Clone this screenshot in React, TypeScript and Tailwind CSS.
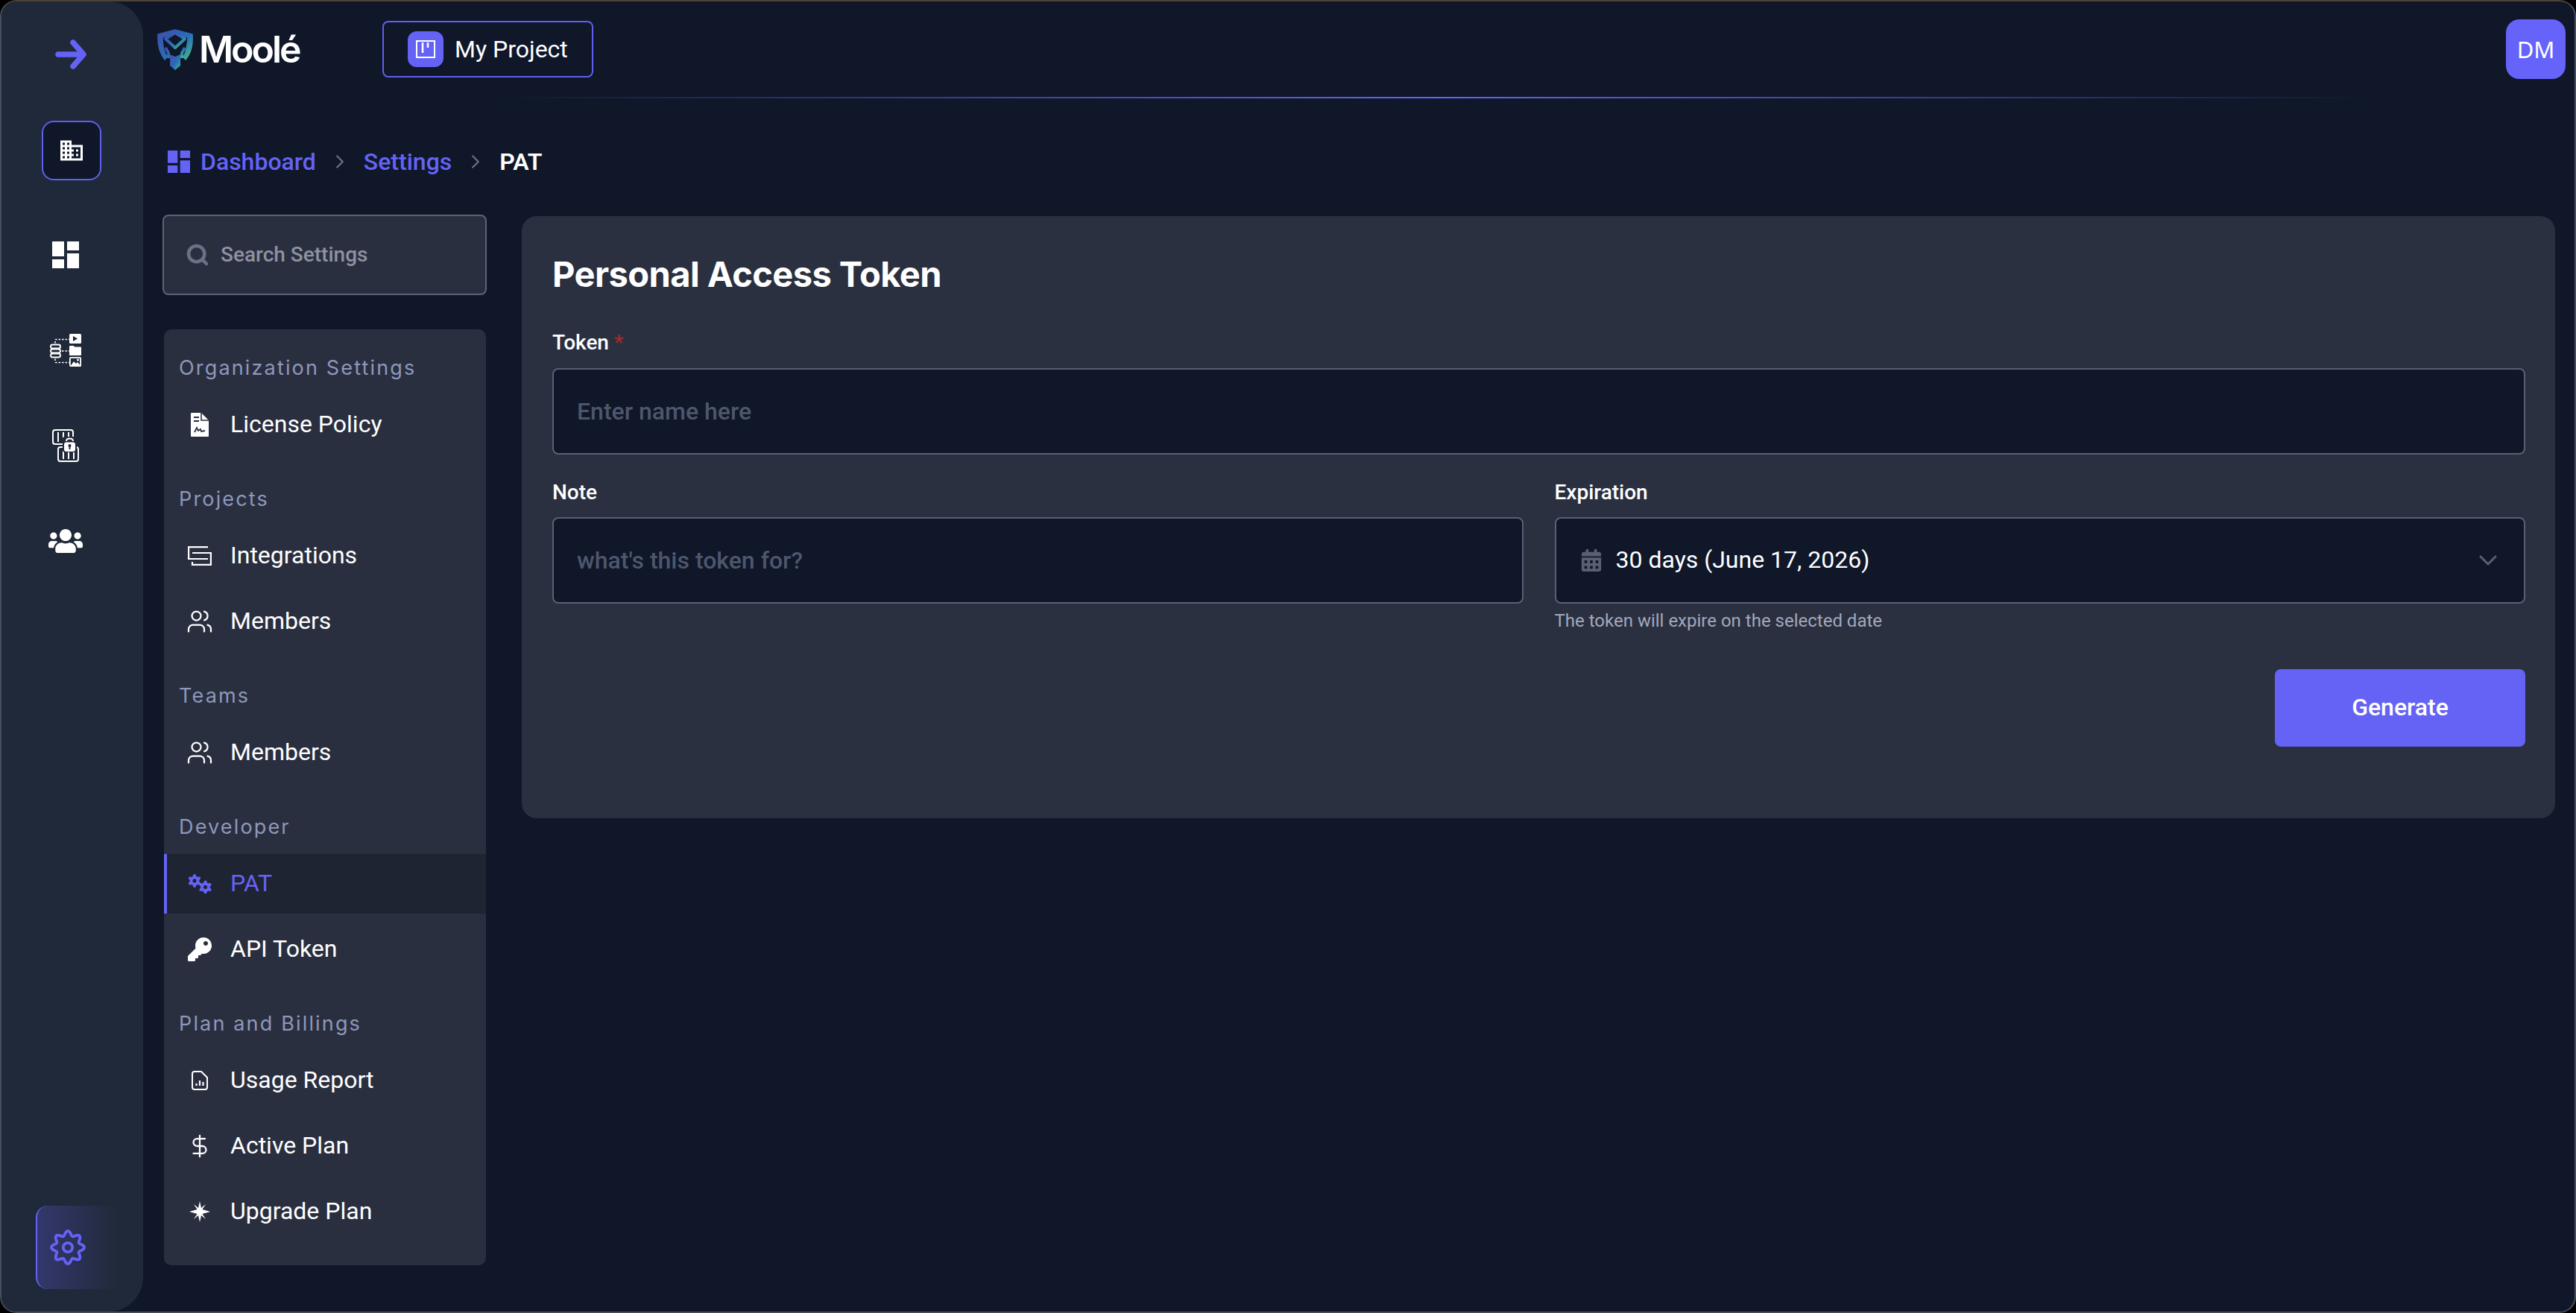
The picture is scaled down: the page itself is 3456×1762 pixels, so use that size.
import React from "react";
import { MdDashboard, MdDomain } from "react-icons/md";
import { FaUsers, FaKey, FaCalendarAlt } from "react-icons/fa";
import { ChevronDown, ChevronRight, DollarSign, Search, Users } from "lucide-react";

function flower(cx: number, cy: number, r: number, amp: number, lobes: number) {
  const pts: string[] = [];
  for (let i = 0; i < 240; i++) {
    const t = (i / 240) * Math.PI * 2;
    const rad = r + amp * Math.cos(lobes * t);
    pts.push(`${(cx + rad * Math.sin(t)).toFixed(2)} ${(cy - rad * Math.cos(t)).toFixed(2)}`);
  }
  return "M" + pts.join("L") + "Z";
}

function GearIcon() {
  return (
    <svg width="48" height="48" viewBox="0 0 48 48" fill="none" stroke="#6563f6" strokeWidth="3.8" strokeLinejoin="round">
      <path d={flower(24, 24, 19, 3, 8)} />
      <circle cx="24" cy="24" r="6.2" />
    </svg>
  );
}

function TwoGears() {
  return (
    <svg width="32" height="26" viewBox="0 0 32 26">
      <path fillRule="evenodd" fill="#6563f6" d={flower(9, 9, 7.6, 1.5, 6) + flower(9, 9, 2.6, 0, 6)} />
      <path fillRule="evenodd" fill="#6563f6" d={flower(23.5, 17.5, 7.6, 1.5, 6) + flower(23.5, 17.5, 2.6, 0, 6)} />
    </svg>
  );
}

function DataIcon() {
  return (
    <svg width="44" height="46" viewBox="0 0 44 46" fill="none">
      <g stroke="#fff" strokeWidth="1.9">
        <rect x="2" y="15.500" width="13" height="5" rx="2.500" />
        <rect x="2" y="21.500" width="13" height="5" rx="2.500" />
        <rect x="2" y="27.500" width="13" height="5" rx="2.500" />
      </g>
      <path d="M8 13.500V9.500q0-1 1-1H27M17 24h10M8 34.500v4q0 1 1 1H27" stroke="#fff" strokeWidth="1.600" strokeDasharray="2.500 2" />
      <rect x="27" y="1" width="16" height="13" rx="1.500" fill="#fff" />
      <path d="M32 4l6 3.500-6 3.500z" fill="#202939" />
      <path d="M27 18q0-1 1-1h5l1 1.500h8q1 0 1 1V29q0 1-1 1H28q-1 0-1-1z" fill="#fff" />
      <rect x="27.900" y="32.900" width="14.200" height="11.200" rx="1" stroke="#fff" strokeWidth="1.800" />
      <path d="M28 45l5-7 3 3 2-2 5 6z" fill="#fff" />
      <circle cx="38.500" cy="36" r="1.500" fill="#fff" />
    </svg>
  );
}

function LockIcon() {
  return (
    <svg width="36" height="44" viewBox="0 0 36 44" fill="none">
      <g stroke="#fff" strokeWidth="2">
        <rect x="1" y="1" width="27" height="19" rx="3" />
        <rect x="8" y="24" width="27" height="19" rx="3" />
        <path d="M8 4v13M15 4v13M22 4v13M15 27v13M22 27v13M29 27v13" />
      </g>
      <rect x="14" y="10" width="19" height="21" rx="3" fill="#202939" />
      <path d="M19 16q0-3.500 4.500-3.500t4.500 3.500" stroke="#fff" strokeWidth="1.800" />
      <rect x="16" y="17.500" width="15" height="12.500" rx="3" fill="#fff" />
      <circle cx="23.500" cy="22" r="2" fill="#202939" />
      <rect x="22.500" y="22.500" width="2" height="4.500" fill="#202939" />
    </svg>
  );
}

function ArrowIcon() {
  return (
    <svg width="44" height="42" viewBox="0 0 44 42" fill="none" stroke="#6563f6" strokeWidth="7.500" strokeLinecap="round" strokeLinejoin="round">
      <path d="M5 21h33M25 5l14 16-14 16" />
    </svg>
  );
}

function ShieldLogo() {
  return (
    <svg width="52" height="57" viewBox="0 0 52 57" fill="none">
      <defs>
        <linearGradient id="lg" x1="0" y1="0" x2="1" y2="1">
          <stop offset="0" stopColor="#3f4ea8" />
          <stop offset="0.55" stopColor="#2a6dbb" />
          <stop offset="1" stopColor="#46c07f" />
        </linearGradient>
      </defs>
      <g stroke="url(#lg)" strokeWidth="4" strokeLinejoin="round">
        <path d="M3 8L26 2l23 6c1 15-2 26-9 34l-3-4c1-1 5-8 6-26L26 7 9 12c0 14 3 22 6 26l-3 4C6 34 2 22 3 8z" fill="url(#lg)" strokeWidth="1.500" />
        <path d="M13 14l13 12 13-12-13-8z" />
        <path d="M13 26l4 7v7M39 26l-4 7v7" />
      </g>
      <path d="M19 35l7 3 7-3v15l-7 6-7-6z" fill="url(#lg)" />
    </svg>
  );
}

function KanbanIcon() {
  return (
    <svg width="26" height="24" viewBox="0 0 26 24" fill="none" stroke="#fff">
      <rect x="1" y="1" width="24" height="22" strokeWidth="2" />
      <path d="M9 3v14M16 3v7" strokeWidth="2.600" />
    </svg>
  );
}

function LicenseIcon() {
  return (
    <svg width="24" height="32" viewBox="0 0 24 32">
      <path d="M1 0h13l10 10v21a1 1 0 0 1-1 1H1a1 1 0 0 1-1-1V1a1 1 0 0 1 1-1z" fill="#fff" />
      <path d="M4 6h7M4 11h7" stroke="#2a2f40" strokeWidth="2" />
      <path d="M14 0v10h10" stroke="#2a2f40" strokeWidth="1.600" fill="none" />
      <path d="M5 26l3-6 2 4 3-2 1 3 5-1" stroke="#2a2f40" strokeWidth="1.800" fill="none" />
    </svg>
  );
}

function IntegrationIcon() {
  return (
    <svg width="32" height="26" viewBox="0 0 32 26" fill="none" stroke="#fff" strokeWidth="2.200">
      <path d="M27 1.100H1.100V17H27" />
      <path d="M6 9h24.900v15.900H6V21" />
    </svg>
  );
}

function ReportIcon() {
  return (
    <svg width="22" height="26" viewBox="0 0 22 26" fill="none" stroke="#fff" strokeWidth="2">
      <path d="M4 1h9l8 8v13a3 3 0 0 1-3 3H4a3 3 0 0 1-3-3V4a3 3 0 0 1 3-3z" />
      <path d="M6.500 20v-3M11 20v-7M15.500 20v-5" strokeWidth="2.200" />
    </svg>
  );
}

function SparkIcon() {
  return (
    <svg width="28" height="28" viewBox="0 0 28 28" fill="#fff">
      <path d="M14 0l2 9 6-5-4.500 7L28 14l-10.500 3 4.500 7-6-5-2 9-2-9-6 5 4.500-7L0 14l10.500-3L6 4l6 5z" />
    </svg>
  );
}

const Item = ({ icon, label, active }: { icon: React.ReactNode; label: string; active?: boolean }) => (
  <div
    className={`flex h-[80px] items-center text-[32px] ${
      active ? "border-l-4 border-[#6563f6] bg-[#1f2433] text-[#6563f6]" : "border-l-4 border-transparent text-white"
    }`}
  >
    <span className="flex w-[85px] shrink-0 items-center justify-center pl-[3px]">{icon}</span>
    <span className="pb-[2px]">{label}</span>
  </div>
);

const Group = ({ title, children }: { title: string; children: React.ReactNode }) => (
  <div className="flex flex-col">
    <div className="mb-[16px] h-[40px] pl-[20px] font-['Inter',sans-serif] text-[27px] leading-[40px] tracking-[0.08em] text-[#8e98ba]">
      {title}
    </div>
    <div className="flex flex-col gap-[8px]">{children}</div>
  </div>
);

const Label = ({ children }: { children: React.ReactNode }) => (
  <div className="h-[40px] text-[28px] font-medium leading-[40px] text-white">{children}</div>
);

export default function App() {
  return (
    <div className="h-[1762px] w-full bg-black font-['Roboto',sans-serif]">
      <div className="flex h-full overflow-hidden rounded-[22px] border-2 border-[#474d5b] border-t-[#4a4336] bg-[#0f1729]">
        <aside className="flex h-full w-[190px] shrink-0 flex-col rounded-r-[46px] bg-[#202939] pb-[30px] pt-[50px]">
          <div className="ml-[71px]"><ArrowIcon /></div>
          <div className="ml-[54px] mt-[68px] flex h-[80px] w-[80px] items-center justify-center rounded-[16px] border-2 border-[#5f5ff0] bg-[#0f1729] text-white">
            <MdDomain size={36} />
          </div>
          <div className="ml-[62px] mt-[76px] flex flex-col gap-[80px] text-white">
            <div className="flex h-[48px] w-[48px] items-center justify-center"><MdDashboard size={48} /></div>
            <div className="flex h-[48px] w-[48px] items-center justify-center"><DataIcon /></div>
            <div className="flex h-[48px] w-[48px] items-center justify-center"><LockIcon /></div>
            <div className="flex h-[48px] w-[48px] items-center justify-center"><FaUsers size={46} /></div>
          </div>
          <div className="ml-[46px] mt-auto flex h-[112px] w-[112px] items-center rounded-l-[16px] border-l-2 border-[#6563f6] bg-gradient-to-r from-[#34376c] to-transparent pl-[17px]">
            <GearIcon />
          </div>
        </aside>

        <div className="flex min-w-0 flex-1 flex-col">
          <header className="flex h-[128px] shrink-0 items-center pr-[12px]">
            <div className="ml-[17px] flex w-[194px] shrink-0 items-center gap-[6px]">
              <ShieldLogo />
              <span className="font-['Inter',sans-serif] text-[50px] font-semibold leading-none tracking-[-0.06em] text-white">Moolé</span>
            </div>
            <button className="ml-[110px] flex h-[76px] w-[283px] items-center rounded-[8px] border-2 border-[#5f5ff0] pl-[32px] text-white">
              <span className="flex h-[48px] w-[48px] items-center justify-center rounded-[12px] bg-[#6563f6]"><KanbanIcon /></span>
              <span className="ml-[15px] text-[32px]">My Project</span>
            </button>
            <div className="ml-auto flex h-[80px] w-[80px] items-center justify-center rounded-[18px] bg-[#6563fa] font-['Noto_Sans',sans-serif] text-[31px] text-white">
              DM
            </div>
          </header>
          <div className="ml-[475px] mr-[267px] h-[2px] shrink-0 bg-gradient-to-r from-transparent via-[#6563f6] to-transparent" />

          <nav className="ml-[28px] mt-[65px] flex h-[40px] shrink-0 items-center text-[32px] font-medium text-[#6563f6]">
            <MdDashboard size={40} />
            <span className="ml-[9px]">Dashboard</span>
            <ChevronRight size={30} className="ml-[17px] text-[#6b7280]" strokeWidth={1.8} />
            <span className="ml-[17px]">Settings</span>
            <ChevronRight size={30} className="ml-[17px] text-[#6b7280]" strokeWidth={1.8} />
            <span className="ml-[17px] font-semibold text-white">PAT</span>
          </nav>

          <div className="mt-[51px] flex items-start">
            <div className="ml-[26px] w-[435px] shrink-0">
              <div className="flex h-[108px] items-center rounded-[8px] border-2 border-[#5d6375] bg-[#2a2f40] pl-[29px]">
                <Search size={32} strokeWidth={3.4} className="text-[#6b7285]" />
                <input
                  placeholder="Search Settings"
                  className="ml-[15px] min-w-0 flex-1 bg-transparent text-[28px] font-medium outline-none placeholder:text-[#8d92a1]"
                />
              </div>
              <div className="ml-[2px] mr-[1px] mt-[46px] flex flex-col gap-[40px] rounded-[10px] bg-[#2a2f40] py-[32px]">
                <Group title="Organization Settings">
                  <Item icon={<LicenseIcon />} label="License Policy" />
                </Group>
                <Group title="Projects">
                  <Item icon={<IntegrationIcon />} label="Integrations" />
                  <Item icon={<Users size={36} strokeWidth={1.5} />} label="Members" />
                </Group>
                <Group title="Teams">
                  <Item icon={<Users size={36} strokeWidth={1.5} />} label="Members" />
                </Group>
                <Group title="Developer">
                  <Item active icon={<TwoGears />} label="PAT" />
                  <Item icon={<FaKey size={32} />} label="API Token" />
                </Group>
                <Group title="Plan and Billings">
                  <Item icon={<ReportIcon />} label="Usage Report" />
                  <Item icon={<DollarSign size={34} strokeWidth={1.6} />} label="Active Plan" />
                  <Item icon={<SparkIcon />} label="Upgrade Plan" />
                </Group>
              </div>
            </div>

            <main className="ml-[47px] mt-[2px] w-[2728px] rounded-[20px] bg-[#2a3040] pb-[96px] pl-[41px] pr-[40px] pt-[48px]">
              <h1 className="h-[60px] font-['Inter',sans-serif] text-[47px] font-bold leading-[60px] tracking-[-0.012em] text-white">Personal Access Token</h1>
              <div className="mt-[42px]">
                <Label>Token <span className="text-[#a52a2a]">*</span></Label>
                <input
                  placeholder="Enter name here"
                  className="mt-[14px] block h-[116px] w-full rounded-[8px] border-2 border-[#596075] bg-[#0f1729] px-[31px] text-[32px] font-medium text-white outline-none placeholder:text-[#4e566c]"
                />
              </div>
              <div className="mt-[31px] grid grid-cols-2 gap-x-[42px]">
                <div>
                  <Label>Note</Label>
                  <input
                    placeholder="what's this token for?"
                    className="mt-[13px] block h-[116px] w-full rounded-[8px] border-2 border-[#596075] bg-[#0f1729] px-[31px] text-[32px] font-medium text-white outline-none placeholder:text-[#4e566c]"
                  />
                </div>
                <div>
                  <Label>Expiration</Label>
                  <div className="mt-[13px] flex h-[116px] items-center rounded-[8px] border-2 border-[#596075] bg-[#0f1729] pl-[32px] pr-[28px] text-[32px] text-white">
                    <FaCalendarAlt size={30} className="text-[#596073]" />
                    <span className="ml-[18px] pb-[2px]">30 days (June 17, 2026)</span>
                    <ChevronDown size={40} strokeWidth={1.8} className="ml-auto text-[#596073]" />
                  </div>
                  <p className="mt-[7px] h-[32px] text-[24px] leading-[32px] text-[#a3a8bd]">The token will expire on the selected date</p>
                </div>
              </div>
              <div className="mt-[49px] flex justify-end">
                <button className="h-[104px] w-[336px] rounded-[8px] bg-[#6563f6] pb-[2px] text-[32px] font-medium text-white">Generate</button>
              </div>
            </main>
          </div>
        </div>
      </div>
    </div>
  );
}
